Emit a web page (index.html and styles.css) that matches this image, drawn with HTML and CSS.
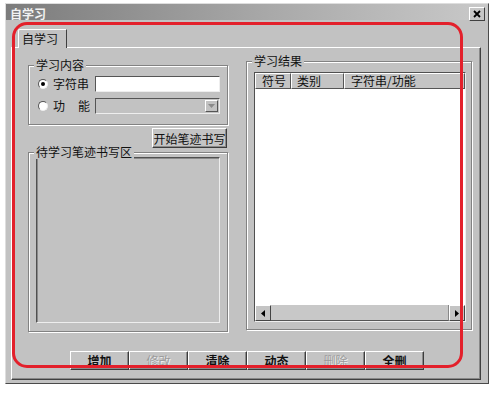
FILE: index.html
```html
<!DOCTYPE html>
<html lang="zh-CN">
<head>
    <meta charset="UTF-8">
    <title>自学习</title>
    <link rel="stylesheet" href="styles.css">
</head>
<body>

    <div class="window">
        <div class="titlebar">
            <span class="title">自学习</span>
            <span class="close">
                <svg width="8" height="8" viewBox="0 0 8 8"><path d="M1 1 L7 7 M7 1 L1 7" stroke="#000" stroke-width="1.8"/></svg>
            </span>
        </div>

        <div class="tabstrip">
            <div class="tab">自学习</div>
        </div>

        <div class="panel">
            <div class="col-left">
                <div class="group group-content">
                    <span class="group-title">学习内容</span>
                    <div class="option">
                        <span class="radio checked"></span>
                        <span class="opt-label">字符串</span>
                        <span class="textbox"></span>
                    </div>
                    <div class="option">
                        <span class="radio"></span>
                        <span class="opt-label spread"><span>功</span><span>能</span></span>
                        <span class="combo">
                            <span class="combo-btn">
                                <svg width="7" height="4" viewBox="0 0 7 4"><path d="M0 0 H7 L3.5 4 Z" fill="#8a8a8a"/></svg>
                            </span>
                        </span>
                    </div>
                </div>

                <button class="btn btn-start">开始笔迹书写</button>

                <div class="group group-pad">
                    <span class="group-title">待学习笔迹书写区</span>
                    <div class="pad"></div>
                </div>
            </div>

            <div class="col-right">
                <div class="group group-result">
                    <span class="group-title">学习结果</span>
                    <div class="listview">
                        <div class="list-head">
                            <span class="hcell c1">符号</span>
                            <span class="hcell c2">类别</span>
                            <span class="hcell c3">字符串/功能</span>
                        </div>
                        <div class="list-body"></div>
                        <div class="hscroll">
                            <span class="sb-btn">
                                <svg width="4" height="7" viewBox="0 0 4 7"><path d="M4 0 V7 L0 3.5 Z" fill="#000"/></svg>
                            </span>
                            <span class="sb-track"></span>
                            <span class="sb-btn">
                                <svg width="4" height="7" viewBox="0 0 4 7"><path d="M0 0 V7 L4 3.5 Z" fill="#000"/></svg>
                            </span>
                        </div>
                    </div>
                </div>
            </div>

            <div class="actions">
                <button class="btn">增加</button>
                <button class="btn disabled">修改</button>
                <button class="btn">清除</button>
                <button class="btn">动态</button>
                <button class="btn disabled">删除</button>
                <button class="btn">全删</button>
            </div>
        </div>
    </div>

    <!-- red marker drawn over the screenshot -->
    <div class="marker"></div>

</body>
</html>
```

FILE: styles.css
```css
body {
    margin: 0;
    background-color: #fff;
    font-family: "Noto Sans CJK SC", "Liberation Sans", sans-serif;
    font-size: 12px;
    color: #111;
}

.window {
    margin: 3px 0 0 5px;
    width: 484px;
    height: 381px;
    box-sizing: border-box;
    background-color: #c2c2c2;
    border-top: 1px solid #dedede;
    border-left: 1px solid #dedede;
    border-right: 1px solid #4a4a4a;
    border-bottom: 1px solid #4a4a4a;
}

.titlebar {
    height: 16px;
    display: flex;
    align-items: center;
    justify-content: space-between;
    padding: 0 3px 0 4px;
    background: linear-gradient(to right, #7c7c7c, #a9a9a9 55%, #c9c9c9);
}

.title {
    color: #f2f2f2;
    font-weight: bold;
    line-height: 14px;
    padding-top: 4px;
}

.close {
    width: 14px;
    height: 12px;
    margin-top: 3px;
    display: flex;
    align-items: center;
    justify-content: center;
    background-color: #c6c6c6;
    border-top: 1px solid #fff;
    border-left: 1px solid #fff;
    border-right: 1px solid #404040;
    border-bottom: 1px solid #404040;
}

.tabstrip {
    height: 27px;
    display: flex;
    align-items: flex-end;
    padding-left: 12px;
}

.tab {
    width: 44px;
    height: 18px;
    line-height: 18px;
    padding-left: 3px;
    border-top: 1px solid #fff;
    border-left: 1px solid #fff;
    border-right: 1px solid #404040;
    border-top-left-radius: 2px;
    background-color: #c2c2c2;
    position: relative;
    z-index: 1;
    margin-bottom: -1px;
}

.panel {
    margin-left: 5px;
    width: 470px;
    height: 333px;
    box-sizing: border-box;
    border-top: 1px solid #fff;
    border-left: 1px solid #fff;
    border-right: 1px solid #404040;
    border-bottom: 1px solid #404040;
    box-shadow: inset -1px -1px 0 #888;
    display: grid;
    grid-template-columns: 200px 226px;
    column-gap: 18px;
    align-items: start;
    padding: 13px 0 0 16px;
}

.col-left {
    padding-top: 4px;
    display: flex;
    flex-direction: column;
}

.group {
    position: relative;
    box-sizing: border-box;
    border: 1px solid #828282;
    box-shadow: inset 1px 1px 0 #fff, 1px 1px 0 #fff;
}

.group-title {
    position: absolute;
    top: -8px;
    left: 5px;
    padding: 0 2px;
    line-height: 14px;
    background-color: #c2c2c2;
}

.group-content {
    height: 60px;
    padding: 10px 0 0 9px;
    display: flex;
    flex-direction: column;
    gap: 6px;
}

.option {
    height: 16px;
    display: flex;
    align-items: center;
}

.radio {
    width: 8px;
    height: 8px;
    border-radius: 50%;
    background-color: #fff;
    border: 1px solid;
    border-color: #555 #eee #eee #555;
    position: relative;
}

.radio.checked::after {
    content: "";
    position: absolute;
    left: 2px;
    top: 2px;
    width: 4px;
    height: 4px;
    border-radius: 50%;
    background-color: #000;
}

.opt-label {
    width: 37px;
    margin-left: 5px;
    line-height: 14px;
}

.opt-label.spread {
    display: flex;
    justify-content: space-between;
}

.textbox, .combo {
    margin-left: 5px;
    width: 125px;
    height: 16px;
    box-sizing: border-box;
    border-top: 1px solid #555;
    border-left: 1px solid #555;
    border-right: 1px solid #eee;
    border-bottom: 1px solid #eee;
    background-color: #fff;
}

.combo {
    background-color: #c2c2c2;
    display: flex;
    justify-content: flex-end;
    align-items: stretch;
    padding: 1px;
}

.combo-btn {
    width: 11px;
    display: flex;
    align-items: center;
    justify-content: center;
    border-top: 1px solid #fff;
    border-left: 1px solid #fff;
    border-right: 1px solid #555;
    border-bottom: 1px solid #555;
}

.btn {
    font-family: inherit;
    font-size: 12px;
    color: #111;
    background-color: #c4c4c4;
    padding: 0;
    border-top: 1px solid #fff;
    border-left: 1px solid #fff;
    border-right: 1px solid #3c3c3c;
    border-bottom: 1px solid #3c3c3c;
    box-shadow: inset -1px -1px 0 #8a8a8a;
}

.btn-start {
    align-self: flex-end;
    margin: 3px 1px 0 0;
    width: 75px;
    height: 20px;
}

.group-pad {
    margin-top: 4px;
    height: 180px;
    padding: 4px 7px 8px 7px;
}

.pad {
    height: 100%;
    box-sizing: border-box;
    border-top: 1px solid #505050;
    border-left: 1px solid #505050;
    border-right: 1px solid #eee;
    border-bottom: 1px solid #eee;
    box-shadow: inset 1px 1px 0 #8a8a8a;
}

.group-result {
    height: 269px;
    padding: 10px 5px 7px 7px;
}

.listview {
    height: 100%;
    box-sizing: border-box;
    border-top: 1px solid #505050;
    border-left: 1px solid #505050;
    border-right: 1px solid #eee;
    border-bottom: 1px solid #eee;
    background-color: #fff;
    display: flex;
    flex-direction: column;
}

.list-head {
    height: 16px;
    display: flex;
    background-color: #c4c4c4;
}

.hcell {
    box-sizing: border-box;
    line-height: 14px;
    border-top: 1px solid #fff;
    border-left: 1px solid #fff;
    border-right: 1px solid #555;
    border-bottom: 1px solid #555;
    padding-left: 6px;
}

.c1 { width: 36px; }
.c2 { width: 53px; padding-left: 5px; }
.c3 { flex: 1; }

.list-body {
    flex: 1;
}

.hscroll {
    height: 16px;
    display: flex;
    background-color: #c4c4c4;
}

.sb-btn {
    width: 14px;
    display: flex;
    align-items: center;
    justify-content: center;
    border-top: 1px solid #fff;
    border-left: 1px solid #fff;
    border-right: 1px solid #444;
    border-bottom: 1px solid #444;
}

.sb-track {
    flex: 1;
    background-color: #c8c8c8;
    border-bottom: 1px solid #555;
    border-right: 1px solid #888;
}

.actions {
    grid-column: 1 / -1;
    display: flex;
    margin-top: 10px;
    padding-left: 42px;
}

.actions .btn {
    width: 59px;
    height: 19px;
    font-weight: bold;
}

.actions .btn.disabled {
    color: #9c9c9c;
    font-weight: normal;
    text-shadow: 1px 1px 0 #eee;
}

.marker {
    position: absolute;
    left: 12px;
    top: 22px;
    width: 445px;
    height: 340px;
    border: 3px solid #e3202b;
    border-radius: 15px;
}
```
